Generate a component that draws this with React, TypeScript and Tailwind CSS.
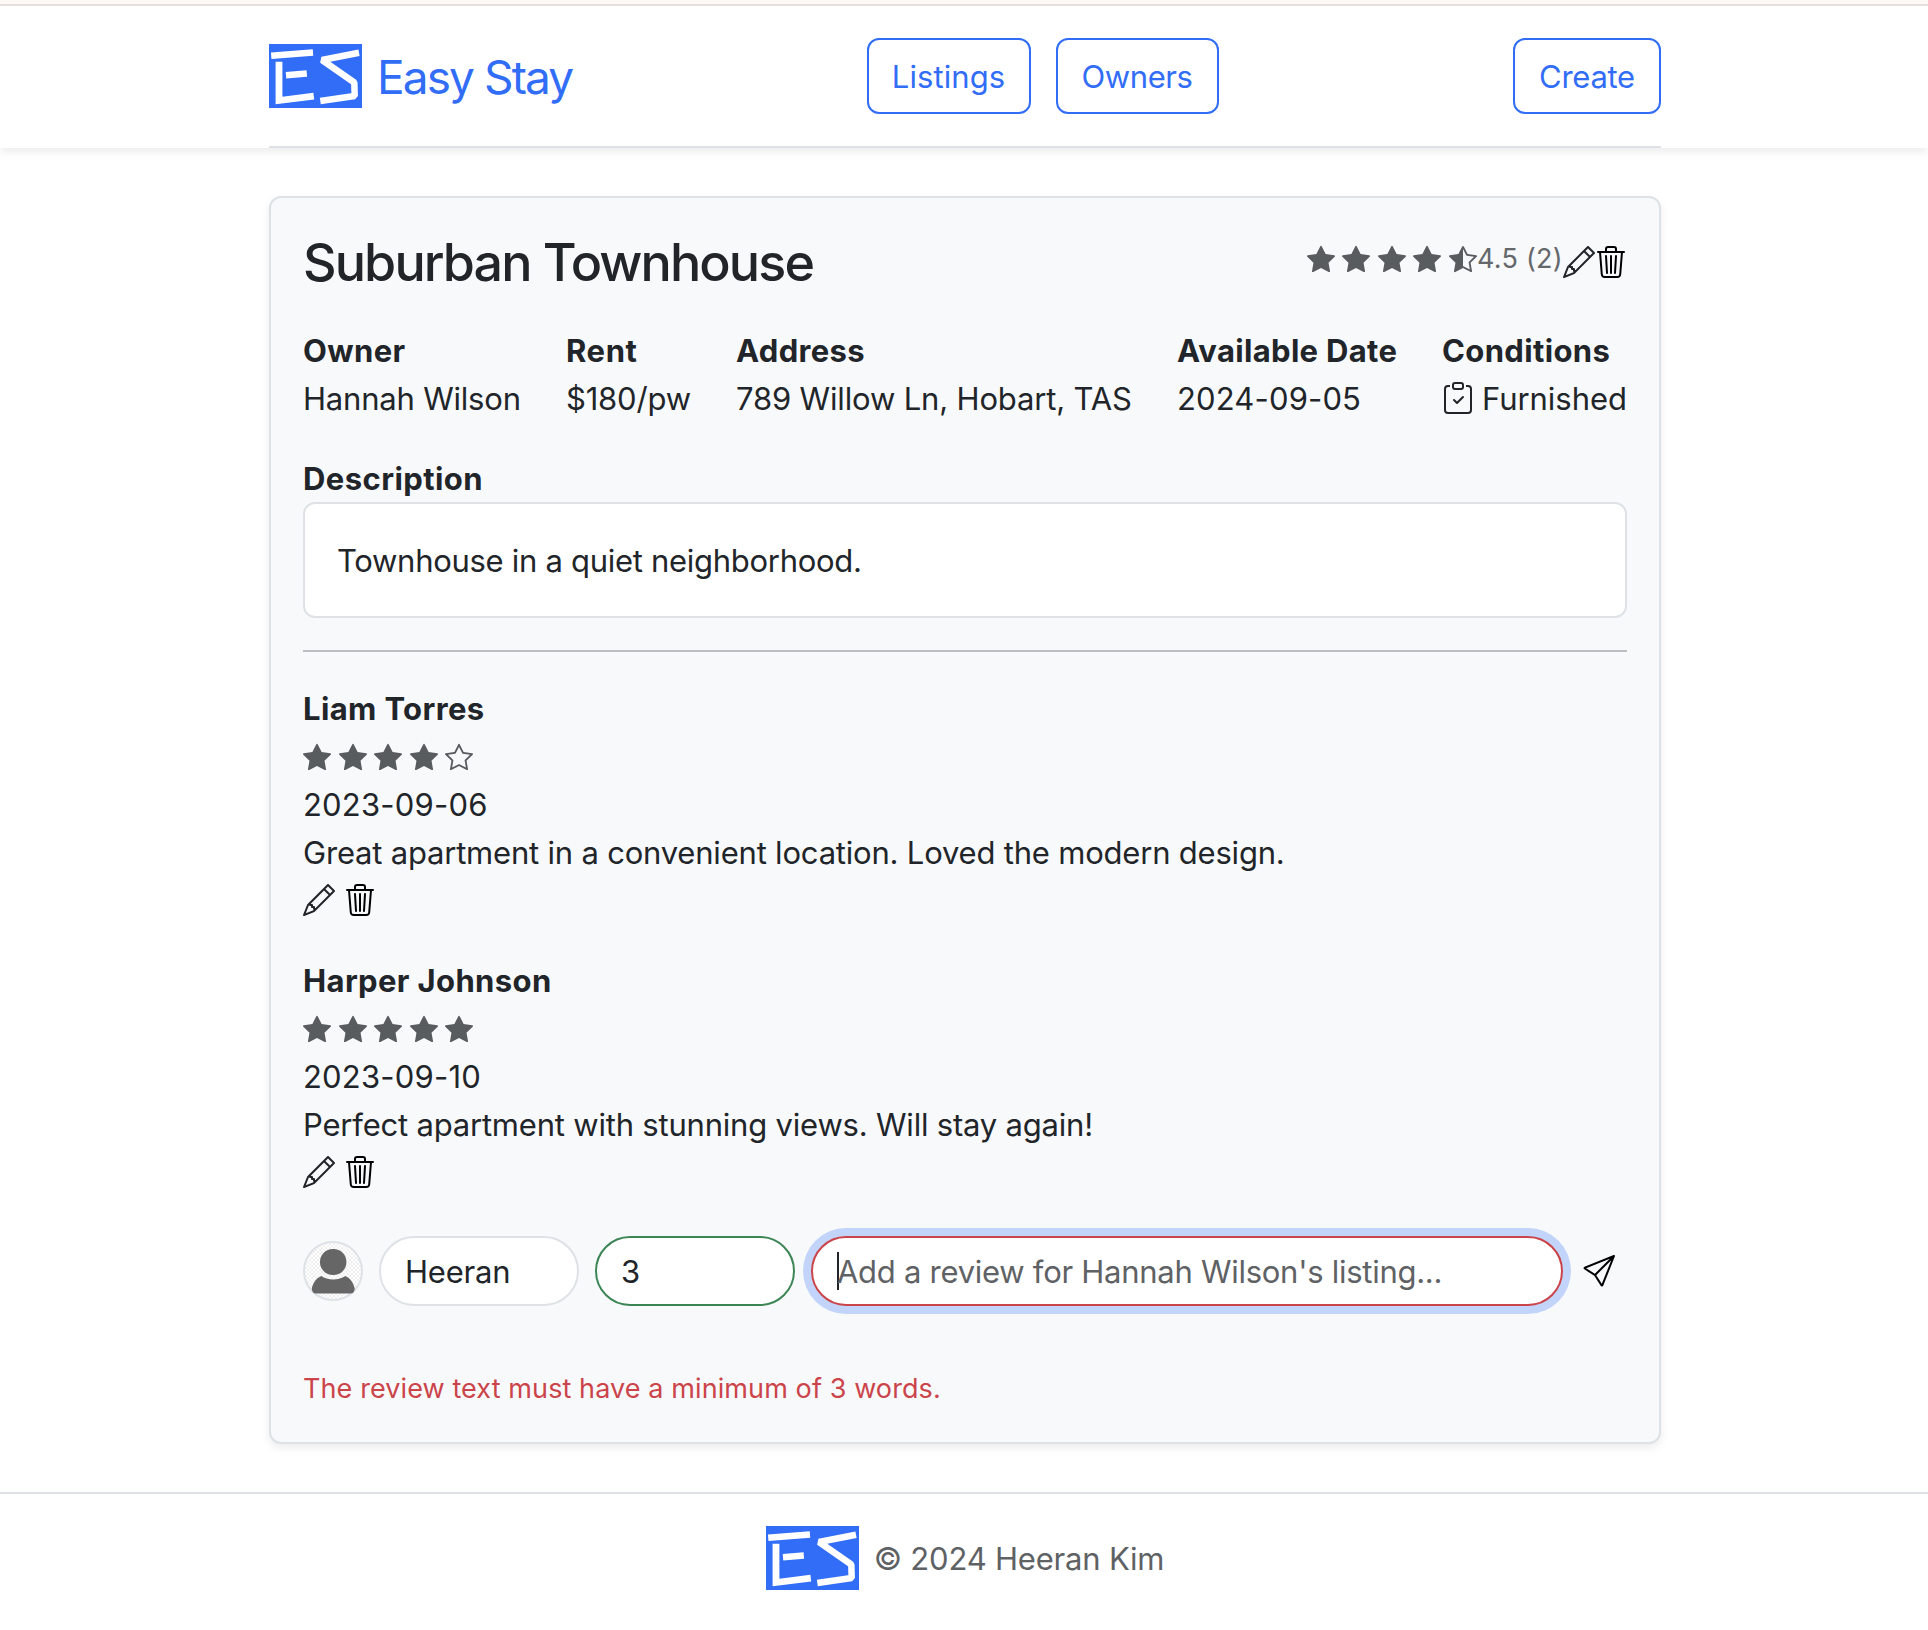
import type { ReactNode } from 'react';
import {
  BsClipboardCheck,
  BsPencil,
  BsSend,
  BsStar,
  BsStarFill,
  BsStarHalf,
  BsTrash3,
} from 'react-icons/bs';

function Logo() {
  return (
    <svg viewBox="0 0 93 64" className="h-16 w-[93px] shrink-0">
      <rect width="93" height="64" fill="#316df6" />
      <g fill="none" stroke="#fff" strokeWidth="6.5">
        <path d="M2.2 11.8 44 8.6" />
        <path d="M10 17.7V56.5L44.8 52.2" strokeWidth="6.8" />
        <path d="M17 31.2 37.8 29.6" />
        <path d="M90 8.8 53 16 85.3 38.5 85.7 52 51.3 57" strokeLinejoin="bevel" />
      </g>
    </svg>
  );
}

function Stars({ value }: { value: number }) {
  return (
    <span className="flex gap-[7.6px] text-[#585c5f]">
      {[1, 2, 3, 4, 5].map((n) => {
        if (value >= n) return <BsStarFill key={n} size={28} />;
        if (value >= n - 0.5) return <BsStarHalf key={n} size={28} />;
        return <BsStar key={n} size={28} />;
      })}
    </span>
  );
}

function Line({ className, children }: { className: string; children: ReactNode }) {
  return <div className={`pt-0.5 leading-[46px] ${className}`}>{children}</div>;
}

function NavButton({ label, className }: { label: string; className: string }) {
  return (
    <button
      className={`h-[76px] rounded-xl border-2 border-[#316df6] pt-px text-center text-[#316df6] ${className}`}
    >
      {label}
    </button>
  );
}

function Field({
  label,
  className,
  labelClass,
  children,
}: {
  label: string;
  className: string;
  labelClass: string;
  children: ReactNode;
}) {
  return (
    <div className={`shrink-0 whitespace-nowrap ${className}`}>
      <Line className={`font-bold ${labelClass}`}>{label}</Line>
      <Line className="">{children}</Line>
    </div>
  );
}

function Review({
  name,
  rating,
  date,
  text,
}: {
  name: string;
  rating: number;
  date: string;
  text: string;
}) {
  return (
    <div>
      <Line className="font-bold tracking-[0.37px]">{name}</Line>
      <div className="flex h-12 items-center pt-0.5">
        <Stars value={rating} />
      </div>
      <Line className="tracking-[0.2px]">{date}</Line>
      <Line className="tracking-[-0.2px]">{text}</Line>
      <div className="flex h-12 items-center gap-[9px]">
        <BsPencil size={32} />
        <BsTrash3 size={32} className="text-black" />
      </div>
    </div>
  );
}

function Avatar() {
  return (
    <svg viewBox="0 0 60 60" className="size-[60px] shrink-0">
      <defs>
        <pattern id="check" width="4" height="4" patternUnits="userSpaceOnUse">
          <rect width="4" height="4" fill="#fff" />
          <rect width="2" height="2" fill="#f0f0f0" />
          <rect x="2" y="2" width="2" height="2" fill="#f0f0f0" />
        </pattern>
      </defs>
      <circle cx="30" cy="30" r="29" fill="url(#check)" stroke="#dee2e6" strokeWidth="2" />
      <rect x="17" y="8" width="26.4" height="26" rx="12.8" fill="#666" />
      <path
        d="M18.3 35C24 39.6 36.500 39.600 42.200 35C47.500 37 50.500 42 51.700 47.500C51.700 50.500 50 52.500 47.500 52.500H13C10.500 52.500 8.800 50.500 8.800 47.500C10 42 13 37 18.300 35Z"
        fill="#666"
      />
    </svg>
  );
}

export default function App() {
  return (
    <div className="min-h-[1630px] bg-white font-[Inter,'Liberation_Sans',sans-serif] text-[31px] leading-[48px] text-[#212529]">
      <div className="h-1.5 border-b-2 border-[#e6e1df] bg-[#fef8f4]" />
      <header className="shadow-[0_4px_8px_rgba(0,0,0,0.075)]">
        <div className="ml-[269px] flex w-[1392px] items-center justify-between border-b-2 border-[#dee2e6] py-8">
          <div className="flex w-[303px] items-center gap-[15px] whitespace-nowrap text-[#316df6]">
            <Logo />
            <span className="pt-0.5 text-[46px] tracking-[-1.9px]">Easy Stay</span>
          </div>
          <nav className="flex gap-[25px]">
            <NavButton label="Listings" className="w-[164px] tracking-[0.09px]" />
            <NavButton label="Owners" className="w-[163px] tracking-[-0.43px]" />
          </nav>
          <NavButton label="Create" className="w-[148px] tracking-[-0.28px]" />
        </div>
      </header>

      <main className="mt-12 ml-[269px] w-[1392px] rounded-xl border-2 border-[#dee2e6] bg-[#f8f9fb] p-8 shadow-[0_4px_8px_rgba(0,0,0,0.075)]">
        <div className="flex h-16 justify-between">
          <h1 className="pt-px text-[52px] leading-[64px] font-medium tracking-[-1.88px] whitespace-nowrap">
            Suburban Townhouse
          </h1>
          <div className="flex h-16 items-center whitespace-nowrap">
            <span className="flex items-center pb-[7px] text-[#65686b]">
              <Stars value={4.5} />
              <span className="w-[86px] pt-px text-[27px] leading-[42px] tracking-[0.25px]">4.5 (2)</span>
            </span>
            <BsPencil size={32} />
            <BsTrash3 size={32} className="text-black" />
          </div>
        </div>

        <div className="mt-8 flex">
          <Field label="Owner" className="w-[263px] tracking-[-0.2px]" labelClass="tracking-[0.4px]">
            Hannah Wilson
          </Field>
          <Field label="Rent" className="w-[170px] tracking-[-0.2px]" labelClass="tracking-[0.6px]">
            $180/pw
          </Field>
          <Field label="Address" className="w-[441px] tracking-[-0.16px]" labelClass="tracking-[0.35px]">
            789 Willow Ln, Hobart, TAS
          </Field>
          <Field label="Available Date" className="w-[266px] tracking-[0.15px]" labelClass="tracking-[0.32px]">
            2024-09-05
          </Field>
          <Field label="Conditions" className="-ml-px tracking-[-0.05px]" labelClass="tracking-[0.36px]">
            <span className="flex items-center gap-2">
              <BsClipboardCheck size={32} className="mb-0.5" />
              Furnished
            </span>
          </Field>
        </div>

        <section className="mt-8">
          <Line className="font-bold tracking-[0.42px]">Description</Line>
          <div className="rounded-xl border-2 border-[#dee2e6] bg-white px-8 pt-[33px] pb-[31px] tracking-[-0.29px]">
            Townhouse in a quiet neighborhood.
          </div>
        </section>

        <hr className="my-8 border-t-2 border-[#bcbec1]" />

        <section className="flex flex-col gap-8">
          <Review
            name="Liam Torres"
            rating={4}
            date="2023-09-06"
            text="Great apartment in a convenient location. Loved the modern design."
          />
          <Review
            name="Harper Johnson"
            rating={5}
            date="2023-09-10"
            text="Perfect apartment with stunning views. Will stay again!"
          />
        </section>

        <form className="mt-10 flex h-[70px] items-center gap-4">
          <Avatar />
          <div className="h-[70px] w-[200px] rounded-full border-2 border-[#dee2e6] bg-white px-6 pt-[10px] tracking-[-0.2px]">
            Heeran
          </div>
          <div className="h-[70px] w-[200px] rounded-full border-2 border-[#3c8555] bg-white px-6 pt-[10px]">
            3
          </div>
          <div className="flex h-[70px] w-[752px] items-center rounded-full border-2 border-[#cb444a] bg-white px-6 whitespace-nowrap text-[#5f6265] shadow-[0_0_0_8px_#c2d4f9]">
            <span className="h-[38px] w-0.5 bg-[#212529]" />
            <span className="-ml-0.5 pt-0.5 tracking-[-0.27px]">
              Add a review for Hannah Wilson&apos;s listing...
            </span>
          </div>
          <BsSend size={32} className="ml-1 text-black" />
        </form>

        <p className="mt-[62px] text-[27px] leading-[42px] tracking-[0.1px] text-[#cb444a]">
          The review text must have a minimum of 3 words.
        </p>
      </main>

      <footer className="mt-12 flex items-center justify-center gap-[15px] border-t-2 border-[#dee2e6] py-8 pl-0.5 tracking-[-0.2px] text-[#5f6265]">
        <Logo />
        <span className="pt-0.5">© 2024 Heeran Kim</span>
      </footer>
    </div>
  );
}
